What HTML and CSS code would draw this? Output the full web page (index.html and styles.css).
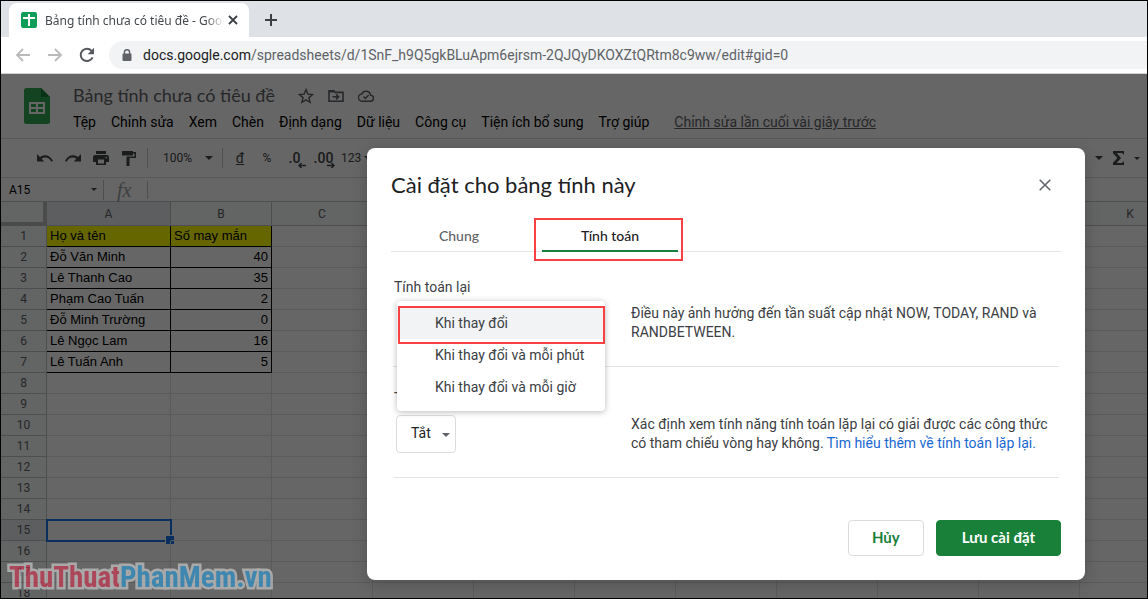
FILE: index.html
```
<!DOCTYPE html>
<html lang="vi">
<head>
<meta charset="utf-8">
<title>Bảng tính chưa có tiêu đề</title>
<link rel="stylesheet" href="styles.css">
</head>
<body>
<div class="window">
  <div class="tabstrip">
    <div class="tab">
      <svg class="favicon" width="16" height="16" viewBox="0 0 16 16"><rect width="16" height="16" rx="2" fill="#0f9d58"/><path d="M7 2h2v3h5v2H9v7H7V7H2V5h5z" fill="#fff"/></svg>
      <span class="tab-title">Bảng tính chưa có tiêu đề - Goog</span>
      <button class="plain" aria-label="Đóng thẻ"><svg width="10" height="10" viewBox="0 0 10 10"><path d="M1 1l8 8M9 1l-8 8" stroke="#3c4043" stroke-width="1.8"/></svg></button>
    </div>
    <button class="plain new-tab" aria-label="Thẻ mới"><svg width="12" height="12" viewBox="0 0 12 12"><path d="M6 0v12M0 6h12" stroke="#3c4043" stroke-width="2"/></svg></button>
  </div>
  <div class="navbar">
    <button class="plain nav-btn" aria-label="Quay lại"><svg width="16" height="16" viewBox="0 0 16 16"><path d="M15 8H2M8 2L2 8l6 6" fill="none" stroke="#bababa" stroke-width="1.8"/></svg></button>
    <button class="plain nav-btn" aria-label="Tiến"><svg width="16" height="16" viewBox="0 0 16 16"><path d="M1 8h13M8 2l6 6-6 6" fill="none" stroke="#bababa" stroke-width="1.8"/></svg></button>
    <button class="plain nav-btn" aria-label="Tải lại"><svg width="16" height="16" viewBox="0 0 16 16"><path d="M13.6 10.4A6.2 6.2 0 1 1 12.6 3.8" fill="none" stroke="#55595d" stroke-width="2"/><path d="M15 .8v6.4H8.6z" fill="#55595d"/></svg></button>
    <div class="omnibox">
      <svg width="10" height="13" viewBox="0 0 10 13"><path d="M2.4 5V3.4a2.6 2.6 0 0 1 5.2 0V5" fill="none" stroke="#5f6368" stroke-width="1.4"/><rect x="0.5" y="4.6" width="9" height="7.4" rx="1" fill="#5f6368"/></svg>
      <span class="url"><b>docs.google.com</b>/spreadsheets/d/1SnF_h9Q5gkBLuApm6ejrsm-2QJQyDKOXZtQRtm8c9ww/edit#gid=0</span>
    </div>
  </div>

  <div class="app">
    <header class="doc-head">
      <svg class="logo" width="26" height="36" viewBox="0 0 26 36"><path d="M2.500 0H17l9 9v24.500a2.500 2.500 0 0 1-2.500 2.500h-21A2.500 2.500 0 0 1 0 33.500v-31A2.500 2.500 0 0 1 2.500 0z" fill="#34a853"/><path d="M17 0l9 9h-9z" fill="#188038"/><path d="M5 14h16v12H5zM7 16v3h5v-3zM14 16v3h5v-3zM7 21v3h5v-3zM14 21v3h5v-3z" fill="#fff" fill-rule="evenodd"/></svg>
      <div class="doc-main">
        <div class="title-row">
          <h1 class="doc-title">Bảng tính chưa có tiêu đề</h1>
          <button class="plain" aria-label="Gắn dấu sao"><svg width="16" height="16" viewBox="0 0 16 16"><path d="M8 1.600l1.900 4.500 4.700.4-3.600 3.100 1.100 4.700L8 11.800l-4.100 2.500L5 9.600 1.400 6.500l4.700-.4z" fill="none" stroke="#5f6368" stroke-width="1.4"/></svg></button>
          <button class="plain" aria-label="Di chuyển"><svg width="16" height="14" viewBox="0 0 16 14"><path d="M1 12.200V1.800h4.800l1.500 1.600H15v8.800z" fill="none" stroke="#5f6368" stroke-width="1.600"/><path d="M1 1.500h5v2H1z" fill="#5f6368"/><path d="M4.500 7.800h6M8 5.200l2.700 2.600L8 10.400" fill="none" stroke="#5f6368" stroke-width="1.500"/></svg></button>
          <button class="plain" aria-label="Trạng thái"><svg width="16" height="12" viewBox="0 0 16 12"><path d="M4.200 11.200h8a3 3 0 0 0 .5-6A4.700 4.700 0 0 0 3.800 4a3.600 3.600 0 0 0 .4 7.200z" fill="none" stroke="#5f6368" stroke-width="1.500"/><path d="M5.500 6.600l1.900 1.900 3.300-3.400" fill="none" stroke="#5f6368" stroke-width="1.400"/></svg></button>
        </div>
        <nav class="menus">
          <button class="plain">Tệp</button><button class="plain">Chỉnh sửa</button><button class="plain">Xem</button><button class="plain">Chèn</button><button class="plain">Định dạng</button><button class="plain">Dữ liệu</button><button class="plain">Công cụ</button><button class="plain">Tiện ích bổ sung</button><button class="plain">Trợ giúp</button>
          <a class="last-edit" href="#">Chỉnh sửa lần cuối vài giây trước</a>
        </nav>
      </div>
    </header>

    <div class="toolbar">
      <button class="plain tool" aria-label="Hoàn tác"><svg width="18" height="10" viewBox="0 0 18 10"><path d="M1 1v7.500h7.300L5.600 5.800C8.600 3.500 13 4 15.300 8.700l1.700-.8C14.200 1.700 8.200.7 4 4.100z" fill="#444746"/></svg></button>
      <button class="plain tool" aria-label="Làm lại"><svg width="18" height="10" viewBox="0 0 18 10"><path d="M17 1v7.500H9.700l2.700-2.700C9.400 3.500 5 4 2.700 8.700L1 7.900C3.800 1.700 9.800.7 14 4.100z" fill="#444746"/></svg></button>
      <button class="plain tool" aria-label="In"><svg width="16" height="14" viewBox="0 0 16 14"><path d="M3 0h10v3H3zM2 4h12a2 2 0 0 1 2 2v5h-3v3H3v-3H0V6a2 2 0 0 1 2-2zM5 8.500V12.500h6V8.500zM12.500 6v1.200h1.500V6z" fill="#444746" fill-rule="evenodd"/></svg></button>
      <button class="plain tool" aria-label="Sao chép định dạng"><svg width="14" height="15" viewBox="0 0 14 15"><path d="M0 0h11v1h3v6H7.500v8H4.500V5.500h8v-3H11V4.500H0z" fill="#444746"/></svg></button>
      <span class="sep"></span>
      <button class="plain zoom-level">100%<i class="caret"></i></button>
      <span class="sep"></span>
      <button class="plain tool currency"><u>đ</u></button>
      <button class="plain tool percent">%</button>
      <button class="plain tool decimals">.0<svg width="8" height="5" viewBox="0 0 8 5"><path d="M8 2.500H2M3.500 0L1 2.500 3.500 5" fill="none" stroke="#444746" stroke-width="1.500"/></svg></button>
      <button class="plain tool decimals">.00<svg width="8" height="5" viewBox="0 0 8 5"><path d="M0 2.500h6M4.500 0L7 2.500 4.500 5" fill="none" stroke="#444746" stroke-width="1.500"/></svg></button>
      <button class="plain number-format">123<i class="caret"></i></button>
      <div class="tools-end">
        <i class="caret"></i>
        <button class="plain" aria-label="Hàm"><svg width="11" height="14" viewBox="0 0 11 14"><path d="M0 0h11v3.200H9.500V2H3.600L8 7l-4.400 5h5.900v-1.200H11V14H0v-2.200L4.400 7 0 2.200z" fill="#444746"/></svg></button>
        <i class="caret caret-small"></i>
      </div>
    </div>

    <div class="formula">
      <button class="plain name-box">A15<i class="caret caret-small"></i></button>
      <span class="fx">fx</span>
      <input class="formula-input" aria-label="Công thức">
    </div>

    <div class="sheet">
      <table class="grid">
        <colgroup><col class="c-head"><col class="c-a"><col class="c-n"><col class="c-n"><col class="c-n"><col class="c-n"><col class="c-n"><col class="c-n"><col class="c-n"><col class="c-n"><col class="c-n"><col class="c-n"></colgroup>
        <thead><tr><th class="corner"></th><th class="on">A</th><th>B</th><th>C</th><th>D</th><th>E</th><th>F</th><th>G</th><th>H</th><th>I</th><th>J</th><th>K</th></tr></thead>
        <tbody id="rows"></tbody>
      </table>
    </div>
  </div>

  <div class="scrim">
    <section class="dialog" role="dialog" aria-labelledby="dlg-title">
      <div class="dialog-head">
        <h2 class="dialog-title" id="dlg-title">Cài đặt cho bảng tính này</h2>
        <button class="plain close" aria-label="Đóng"><svg width="12" height="12" viewBox="0 0 12 12"><path d="M.7.7l10.600 10.600M11.300.7L.7 11.300" stroke="#5f6368" stroke-width="1.500"/></svg></button>
      </div>
      <div class="dialog-tabs" role="tablist">
        <button class="plain dialog-tab" role="tab">Chung</button>
        <button class="plain dialog-tab active" role="tab" aria-selected="true">Tính toán</button>
      </div>
      <div class="setting">
        <div class="setting-label">Tính toán lại</div>
        <div class="setting-body">
          <div class="control">
            <div class="options" role="listbox">
              <button class="plain option current" role="option">Khi thay đổi</button>
              <button class="plain option" role="option">Khi thay đổi và mỗi phút</button>
              <button class="plain option" role="option">Khi thay đổi và mỗi giờ</button>
            </div>
          </div>
          <p class="note">Điều này ảnh hưởng đến tần suất cập nhật NOW, TODAY, RAND và RANDBETWEEN.</p>
        </div>
      </div>
      <div class="setting">
        <label class="setting-label" for="iter">Tính toán lặp lại</label>
        <div class="setting-body">
          <div class="control"><span class="select-wrap"><select id="iter" class="select"><option>Tắt</option><option>Bật</option></select></span></div>
          <p class="note">Xác định xem tính năng tính toán lặp lại có giải được các công thức có tham chiếu vòng hay không. <a href="#">Tìm hiểu thêm về tính toán lặp lại.</a></p>
        </div>
      </div>
      <div class="actions">
        <button class="btn">Hủy</button>
        <button class="btn primary">Lưu cài đặt</button>
      </div>
    </section>
  </div>
  <div class="watermark"><span class="wm-red">ThuThuat</span><span class="wm-blue">PhanMem.vn</span></div>
</div>
<script src="sheet.js"></script>
</body>
</html>
```

FILE: styles.css
```
* { box-sizing: border-box; }
body {
  margin: 0;
  font-family: Roboto, "Noto Sans", sans-serif;
  font-size: 14px;
  color: #202124;
}
.window {
  position: relative;
  display: flex;
  flex-direction: column;
  height: 100vh;
  border: 1px solid #000;
  overflow: hidden;
  background: #fff;
}
.plain {
  display: inline-flex;
  align-items: center;
  justify-content: center;
  padding: 0;
  border: 0;
  background: none;
  font: inherit;
  color: inherit;
  white-space: nowrap;
}

/* Browser frame */
.tabstrip {
  display: flex;
  align-items: center;
  gap: 16px;
  flex: none;
  height: 36px;
  padding: 2px 0 0 8px;
  background: #dee1e6;
}
.tab {
  display: flex;
  align-items: center;
  gap: 4px;
  width: 240px;
  height: 34px;
  padding: 0 11px 0 12px;
  border-radius: 8px 8px 0 0;
  background: #fff;
}
.favicon { flex: none; margin-right: 4px; }
.tab-title {
  flex: 1;
  overflow: hidden;
  white-space: nowrap;
  font: 12px "Noto Sans", sans-serif;
  color: #45494d;
  mask-image: linear-gradient(to right, #000 90%, transparent);
}
.navbar {
  display: flex;
  align-items: center;
  flex: none;
  height: 37px;
  padding-left: 6px;
  border-bottom: 1px solid #d0d2d5;
}
.nav-btn { width: 32px; }
.omnibox {
  display: flex;
  align-items: center;
  gap: 11px;
  flex: 1;
  height: 28px;
  margin-left: 6px;
  padding-left: 13px;
  border-radius: 14px 0 0 14px;
  background: #f1f3f4;
}
.url { white-space: nowrap; color: #5f6368; }
.url b { font-weight: 400; color: #202124; }

/* Spreadsheet */
.app { flex: 1; min-height: 0; overflow: hidden; }
.doc-head {
  display: flex;
  align-items: flex-start;
  gap: 23px;
  height: 65px;
  padding: 10px 0 0 23px;
  border-bottom: 1px solid #dadce0;
}
.logo { flex: none; margin-top: 4px; }
.title-row { display: flex; align-items: center; gap: 14px; height: 24px; }
.doc-title {
  margin: 0 9px 0 0;
  padding-bottom: 2px;
  font: 400 18px Lato, sans-serif;
  color: #5f6368;
  white-space: nowrap;
}
.menus { display: flex; align-items: center; gap: 15px; height: 28px; color: #000; }
.last-edit { margin-left: 10px; color: #5f6368; white-space: nowrap; }
.toolbar {
  display: flex;
  align-items: center;
  height: 39px;
  padding-left: 30px;
  border-bottom: 1px solid #dadce0;
  color: #444746;
}
.tool { width: 28px; }
.currency { margin-left: 3px; }
.percent { width: 26px; font-size: 12px; }
.decimals { position: relative; width: 29px; font-weight: 500; }
.decimals svg { position: absolute; right: 3px; bottom: -2px; }
.sep { width: 1px; height: 20px; margin-left: 4px; background: #c6c8cb; }
.zoom-level {
  justify-content: space-between;
  width: 50px;
  margin: 0 5px 0 15px;
  font-size: 12px;
}
.number-format { gap: 3px; margin-left: 3px; font-size: 12px; }
.caret {
  flex: none;
  border: 4px solid transparent;
  border-top-color: #444746;
  border-bottom-width: 0;
}
.caret-small { border-width: 3px 3px 0; }
.tools-end { display: flex; align-items: center; gap: 10px; margin-left: auto; padding-right: 7px; }
.formula {
  display: flex;
  align-items: center;
  height: 24px;
  border-bottom: 1px solid #c0c3c6;
}
.name-box {
  justify-content: space-between;
  width: 102px;
  padding: 0 6px 0 8px;
  font-size: 12px;
  color: #000;
}
.fx {
  width: 44px;
  border-left: 1px solid #c0c3c6;
  padding-left: 13px;
  font: italic 20px/20px "Liberation Serif", serif;
  color: #9aa0a6;
}
.formula-input {
  flex: 1;
  height: 18px;
  border: 0;
  border-left: 1px solid #c0c3c6;
  background: none;
}
.grid {
  width: 1180px;
  table-layout: fixed;
  border-collapse: separate;
  border-spacing: 0;
}
.c-head { width: 46px; }
.c-a { width: 124px; }
.c-n { width: 101px; }
.grid th {
  padding: 0;
  border-right: 1px solid #c0c3c6;
  border-bottom: 1px solid #c0c3c6;
  background: #f8f9fa;
  font-size: 12px;
  font-weight: 400;
  color: #5f6368;
}
.grid thead th { height: 24px; }
.grid tbody th { height: 21px; line-height: 20px; }
.grid .on { background: #e8eaed; }
.grid .corner { border-right: 4px solid #bcbcbc; border-bottom: 4px solid #bcbcbc; }
.grid td {
  position: relative;
  padding: 0 3px;
  border-right: 1px solid #e2e3e3;
  border-bottom: 1px solid #e2e3e3;
  font: 13px/20px "Liberation Sans", sans-serif;
  color: #000;
  white-space: nowrap;
}
.grid .data { border-color: #000; }
.grid .num { text-align: right; }
.grid .fill { background: #ff0; }
.grid .selected { outline: 2px solid #1a73e8; outline-offset: -1px; }
.grid .selected::after {
  content: "";
  position: absolute;
  right: -5px;
  bottom: -5px;
  width: 8px;
  height: 8px;
  border: 1px solid #fff;
  background: #1a73e8;
}

/* Dialog */
.scrim {
  position: absolute;
  inset: 73px 0 0;
  display: flex;
  align-items: flex-start;
  justify-content: flex-end;
  padding: 74px 62px 0 0;
  background: rgba(0, 0, 0, 0.6);
}
.dialog {
  width: 718px;
  padding: 23px 24px 24px;
  border-radius: 8px;
  background: #fff;
  box-shadow: 0 4px 16px rgba(0, 0, 0, 0.2);
}
.dialog-head { display: flex; align-items: center; justify-content: space-between; height: 28px; }
.dialog-title { margin: 0; font: 400 22px/28px Lato, sans-serif; }
.close { margin-right: 10px; }
.dialog-tabs {
  display: flex;
  gap: 15px;
  height: 34px;
  margin-top: 19px;
  border-bottom: 1px solid #e4e5e7;
}
.dialog-tab {
  position: relative;
  width: 136px;
  height: 34px;
  padding-top: 2px;
  border-bottom: 2px solid transparent;
  font: 500 14px Lato, sans-serif;
  color: #5f6368;
}
.dialog-tab.active { border-color: #188038; color: #202124; }
.dialog-tab.active::after {
  content: "";
  position: absolute;
  inset: 0 -5px -11px -8px;
  border: 2px solid #f94144;
}
.setting {
  height: 111px;
  margin: 0 2px;
  border-bottom: 1px solid #e4e5e7;
  color: #3c4043;
}
.dialog-tabs + .setting { height: 115px; padding-top: 4px; }
.setting-label { display: block; padding: 21px 0 7px 1px; line-height: 20px; }
.setting-body { display: grid; grid-template-columns: 238px 1fr; }
.control { position: relative; height: 38px; padding-left: 3px; }
.note { margin: 0; line-height: 19px; }
.note a { color: #1967d2; text-decoration: none; }
.options {
  position: absolute;
  z-index: 1;
  top: -3px;
  left: 4px;
  width: 208px;
  padding: 6px 0 8px;
  border-radius: 4px;
  background: #fff;
  box-shadow: 0 1px 6px rgba(0, 0, 0, 0.28);
}
.option {
  position: relative;
  justify-content: flex-start;
  width: 100%;
  height: 32px;
  padding-left: 38px;
}
.option.current { background: #f1f3f4; }
.option.current::after {
  content: "";
  position: absolute;
  inset: -1px 0 -5px 1px;
  border: 2px solid #f94144;
}
.select-wrap { position: relative; display: inline-block; }
.select {
  appearance: none;
  width: 60px;
  height: 38px;
  padding: 0 0 2px 14px;
  border: 1px solid #dadce0;
  border-radius: 4px;
  background: #fff;
  font: inherit;
  color: #202124;
}
.select-wrap::after {
  content: "";
  position: absolute;
  top: 18px;
  right: 6px;
  border: 4px solid transparent;
  border-top-color: #5f6368;
  border-bottom-width: 0;
}
.actions { display: flex; justify-content: flex-end; gap: 12px; margin-top: 42px; }
.btn {
  height: 36px;
  padding: 0 23px 2px;
  border: 1px solid #dadce0;
  border-radius: 4px;
  background: #fff;
  font: 700 15px Lato, sans-serif;
  color: #188038;
}
.btn.primary { padding: 0 25px 2px; border-color: #188038; background: #188038; color: #fff; }

.watermark {
  position: absolute;
  left: 8px;
  bottom: 1px;
  font: 700 29px/40px "Roboto Condensed", Roboto, sans-serif;
  -webkit-text-stroke: 5px #d7d7d7;
  paint-order: stroke fill;
  opacity: 0.6;
}
.wm-red { color: #dc3452; }
.wm-blue { color: #289de1; }
```

FILE: sheet.js
```
const data = [
  ["Họ và tên", "Số may mắn"],
  ["Đỗ Văn Minh", 40],
  ["Lê Thanh Cao", 35],
  ["Phạm Cao Tuấn", 2],
  ["Đỗ Minh Trường", 0],
  ["Lê Ngọc Lam", 16],
  ["Lê Tuấn Anh", 5]
];
const body = document.getElementById("rows");
for (let r = 1; r <= 18; r++) {
  const row = body.insertRow();
  const head = document.createElement("th");
  head.textContent = r;
  if (r === 15) head.className = "on";
  row.append(head);
  for (let c = 0; c < 11; c++) {
    const cell = row.insertCell();
    const record = data[r - 1];
    if (record && c < 2) {
      cell.textContent = record[c];
      cell.classList.add("data");
      if (r === 1) cell.classList.add("fill");
      else if (c === 1) cell.classList.add("num");
    }
    if (r === 15 && c === 0) cell.classList.add("selected");
  }
}
```
